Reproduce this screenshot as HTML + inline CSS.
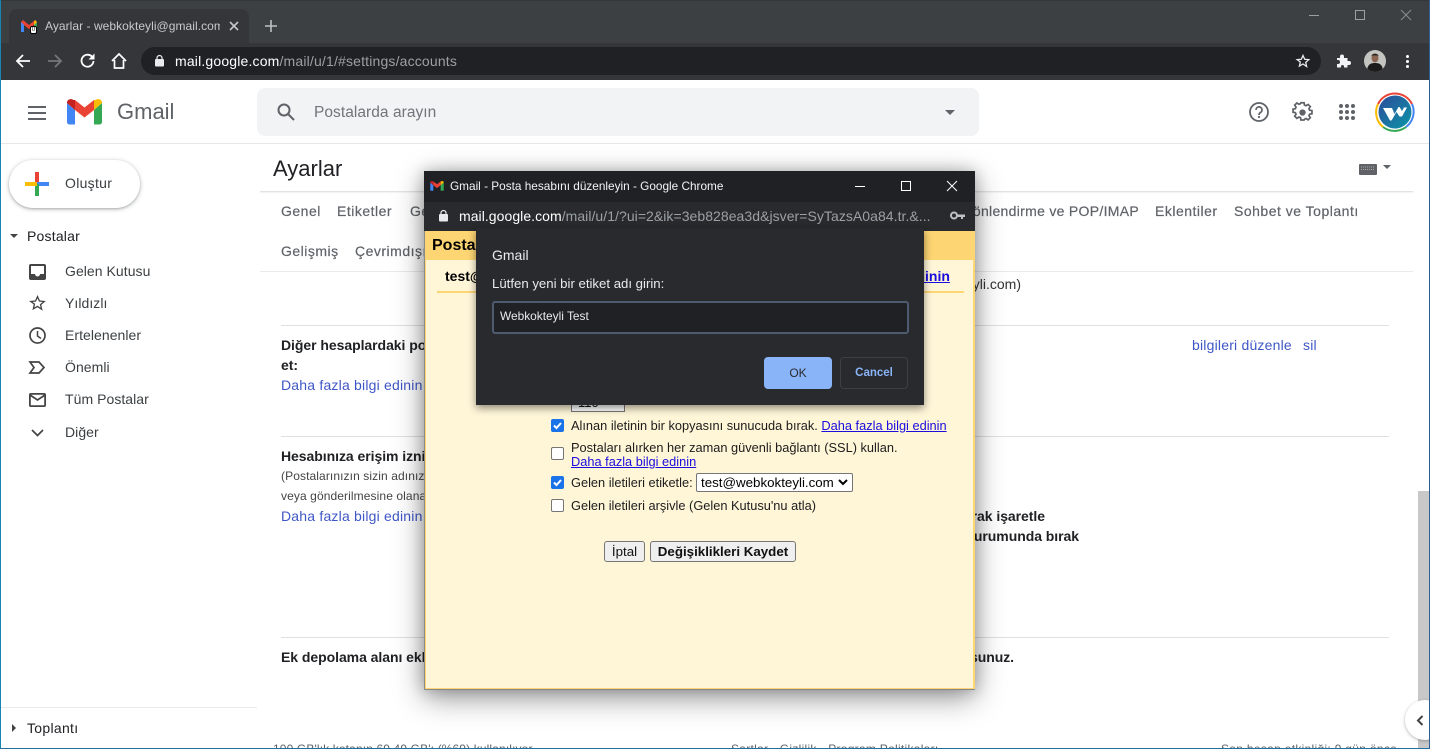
<!DOCTYPE html>
<html lang="tr"><head><meta charset="utf-8"><title>Ayarlar</title>
<style>
html,body{margin:0;padding:0;width:1430px;height:749px;overflow:hidden;background:#fff}
body{position:relative;font-family:"Liberation Sans",sans-serif}
.a{position:absolute}
.t{position:absolute;white-space:nowrap;line-height:16px}
svg{position:absolute;overflow:visible}
.nav{font-size:14px;color:#5f6368;letter-spacing:.5px;-webkit-text-stroke:.2px #5f6368}
.side{font-size:14px;color:#3c4043;letter-spacing:.05px;left:65px;-webkit-text-stroke:0}
.b{font-size:14px;font-weight:bold;color:#202124;letter-spacing:-.05px}
.l{font-size:14px;color:#3f57c6;letter-spacing:.2px}
.s{font-size:12px;color:#444;letter-spacing:.1px}
.p{font-size:12.8px;color:#1c1c1c}
.u{color:#1a0dde;text-decoration:underline}
.cb{position:absolute;left:551px;width:13px;height:13px;box-sizing:border-box;border:1px solid #767676;border-radius:2px;background:#fff}
.cb.on{background:#1a73e8;border-color:#1a73e8}
.btn{position:absolute;box-sizing:border-box;height:21px;border:1px solid #767676;border-radius:3px;background:#efefef;font-size:13.33px;line-height:19px;text-align:center;color:#111}
</style></head><body>

<!-- browser chrome -->
<div class="a" style="left:0;top:0;width:1430px;height:43px;background:#3c4043"></div>
<div class="a" style="left:0;top:0;width:1430px;height:1px;background:#33373a"></div>
<div class="a" style="left:9px;top:9px;width:240px;height:34px;background:#35363a;border-radius:8px 8px 0 0"></div>
<div class="a" style="left:0;top:43px;width:1430px;height:37px;background:#35363a"></div>
<svg style="left:21px;top:20px" width="16" height="12" viewBox="0 0 16 12"><path d="M0 2v10h3V5l5 4 5-4v7h3V2L14 0 8 5 2 0z" fill="#ea4335"/><path d="M0 2v10h3V5z" fill="#4285f4"/><path d="M13 5v7h3V2z" fill="#34a853"/><path d="M13 2v3l3-3-2-2z" fill="#fbbc04"/></svg>
<div class="a" style="left:30px;top:26px;width:7px;height:8px;background:#fff;border:1px solid #000;box-sizing:border-box;border-radius:2px;font-size:6px;line-height:6px;text-align:center;color:#000">0</div>
<div class="t" style="left:45px;top:18px;width:175px;overflow:hidden;font-size:12px;color:#c6cacd;letter-spacing:.05px">Ayarlar - webkokteyli@gmail.com</div>
<svg style="left:229px;top:21px" width="10" height="10"><path d="M1 1l8 8M9 1l-8 8" stroke="#c4c7c9" stroke-width="1.6"/></svg>
<svg style="left:265px;top:20px" width="12" height="12"><path d="M6 0v12M0 6h12" stroke="#bdc1c6" stroke-width="1.6"/></svg>
<svg style="left:1309px;top:15px" width="10" height="1"><path d="M0 .5h10" stroke="#9aa0a6"/></svg>
<svg style="left:1355px;top:10px" width="10" height="10"><rect x=".5" y=".5" width="9" height="9" fill="none" stroke="#9aa0a6"/></svg>
<svg style="left:1401px;top:10px" width="10" height="10"><path d="M0 0l10 10M10 0L0 10" stroke="#8a8e92"/></svg>
<!-- toolbar -->
<svg style="left:16px;top:54px" width="14" height="14"><path d="M7 1L1 7l6 6M1 7h13" fill="none" stroke="#fff" stroke-width="1.8"/></svg>
<svg style="left:48px;top:54px" width="14" height="14"><path d="M7 1l6 6-6 6M13 7H0" fill="none" stroke="#74777b" stroke-width="1.8"/></svg>
<svg style="left:80px;top:53px" width="15" height="15" viewBox="0 0 15 15"><path d="M13.500 8a6 6 0 1 1-1.700-4.500" fill="none" stroke="#fff" stroke-width="1.800"/><path d="M14.500 .5v6h-6z" fill="#fff"/></svg>
<svg style="left:111px;top:53px" width="16" height="16"><path d="M1 8l7-7 7 7M3.500 7v8h9V7" fill="none" stroke="#fff" stroke-width="1.700"/></svg>
<div class="a" style="left:141px;top:47px;width:1180px;height:28px;border-radius:14px;background:#202124"></div>
<svg style="left:155px;top:55px" width="9" height="12"><rect y="4" width="9" height="7.500" rx="1" fill="#e8eaed"/><path d="M2 5V3a2.500 2.500 0 0 1 5 0v2" fill="none" stroke="#e8eaed" stroke-width="1.200"/></svg>
<div class="t" style="left:175px;top:53px;font-size:14px;color:#fff;letter-spacing:.17px">mail.google.com<span style="color:#9aa0a6">/mail/u/1/#settings/accounts</span></div>
<svg style="left:1296px;top:54px" width="14" height="14" viewBox="0 0 24 24"><path d="M12 2.500l2.900 6.500 7.100.7-5.400 4.700 1.600 7L12 17.100l-6.200 3.600 1.600-7L2 9.700l7.100-.7z" fill="none" stroke="#e8eaed" stroke-width="2.200"/></svg>
<svg style="left:1336px;top:53px" width="15" height="15" viewBox="0 0 15 15"><path d="M1 5h3V3.500a2 2 0 0 1 4 0V5h3.500v3H13a2 2 0 0 1 0 4h-1.500v2.500H8V13a1.600 1.600 0 0 0-3 0v1.500H1V11h1a2 2 0 0 0 0-4H1z" fill="#f1f3f4"/></svg>
<svg style="left:1364px;top:50px" width="22" height="22" viewBox="0 0 22 22"><defs><clipPath id="av"><circle cx="11" cy="11" r="11"/></clipPath></defs><g clip-path="url(#av)"><rect width="22" height="22" fill="#c4c4c0"/><path d="M3 22c0-7 3-9 8-9s8 2 8 9z" fill="#1d1c1c"/><ellipse cx="11" cy="8" rx="3.500" ry="4.500" fill="#8a6552"/><path d="M7.500 6c0-3 7-3 7 0l-1-.5h-5z" fill="#2a2320"/></g></svg>
<div class="a" style="left:1406px;top:55px;width:3px;height:3px;border-radius:50%;background:#fff;box-shadow:0 5px #fff,0 10px #fff"></div>

<!-- gmail header -->
<div class="a" style="left:0;top:143px;width:1430px;height:1px;background:#e6e7e8"></div>
<div class="a" style="left:28px;top:106px;width:18px;height:2px;background:#5f6368;box-shadow:0 6px #5f6368,0 12px #5f6368"></div>
<svg style="left:67px;top:99px" width="35" height="26" viewBox="0 0 35 26"><path d="M0 4v19a2.500 2.500 0 0 0 2.500 2.500H8V11z" fill="#4285f4"/><path d="M27 11v14.500h5.500A2.500 2.500 0 0 0 35 23V4z" fill="#34a853"/><path d="M27 1v10l8-7V3.500C35 .5 31 -1 28.500 1z" fill="#fbbc04"/><path d="M8 11V1l9.500 7.500L27 1v10l-9.500 7.500z" fill="#ea4335"/><path d="M0 3.500V4l8 7V1L6.500 1C4 -1 0 .5 0 3.500z" fill="#c5221f"/></svg>
<div class="t" style="left:117px;top:99px;font-size:22px;line-height:26px;color:#5f6368">Gmail</div>
<div class="a" style="left:257px;top:88px;width:722px;height:48px;border-radius:8px;background:#f1f3f4"></div>
<svg style="left:277px;top:103px" width="18" height="18"><circle cx="7" cy="7" r="5.500" fill="none" stroke="#5f6368" stroke-width="2"/><path d="M11 11l6 6" stroke="#5f6368" stroke-width="2"/></svg>
<div class="t" style="left:314px;top:105px;font-size:15.500px;color:#70757a;letter-spacing:.05px">Postalarda arayın</div>
<div class="a" style="left:945px;top:110px;border-style:solid;border-width:5px 5px 0;border-color:#5f6368 transparent transparent"></div>
<svg style="left:1249px;top:102px" width="20" height="20" viewBox="0 0 20 20"><circle cx="10" cy="10" r="9" fill="none" stroke="#5f6368" stroke-width="1.800"/><path d="M7 8a3 3 0 1 1 4.500 2.500c-1 .6-1.500 1-1.500 2.500" fill="none" stroke="#5f6368" stroke-width="1.700"/><circle cx="10" cy="15" r="1.100" fill="#5f6368"/></svg>
<svg style="left:1292px;top:102px" width="21" height="21" viewBox="0 0 24 24"><path d="M10 2h4l.5 3 2 .9 2.600-1.700 2.800 2.800-1.700 2.600.9 2 2.900.4v4l-2.900.5-.9 2 1.700 2.500-2.800 2.800-2.600-1.700-2 .9L14 24h-4l-.5-2.900-2-.9-2.600 1.700-2.800-2.800 1.700-2.500-.9-2L0 14.100v-4l2.900-.4.900-2-1.700-2.600 2.800-2.800 2.600 1.700 2-.9z" transform="translate(1.200 -1) scale(.9)" fill="none" stroke="#5f6368" stroke-width="2.200"/><circle cx="12" cy="12" r="3.600" fill="#5f6368"/></svg>
<svg style="left:1339px;top:104px" width="16" height="16" fill="#5f6368"><circle cx="2" cy="2" r="2"/><circle cx="8" cy="2" r="2"/><circle cx="14" cy="2" r="2"/><circle cx="2" cy="8" r="2"/><circle cx="8" cy="8" r="2"/><circle cx="14" cy="8" r="2"/><circle cx="2" cy="14" r="2"/><circle cx="8" cy="14" r="2"/><circle cx="14" cy="14" r="2"/></svg>
<svg style="left:1375px;top:92px" width="40" height="40" viewBox="0 0 40 40"><defs><linearGradient id="g" x1="0" y1="0" x2="1" y2="1"><stop offset="0" stop-color="#2f4a9a"/><stop offset="1" stop-color="#0a96a8"/></linearGradient></defs><path d="M3 12A19 19 0 0 1 37 12" fill="none" stroke="#ea4335" stroke-width="2"/><path d="M37 12A19 19 0 0 1 31 35" fill="none" stroke="#4285f4" stroke-width="2"/><path d="M31 35A19 19 0 0 1 8 35" fill="none" stroke="#34a853" stroke-width="2"/><path d="M8 35A19 19 0 0 1 3 12" fill="none" stroke="#fbbc04" stroke-width="2"/><circle cx="20" cy="20" r="16.500" fill="url(#g)"/><path d="M8 16h9l2.500 6 4-7h1l2.500 4 2-3.500h3l-5 9h-2.500l-3-4.500-5 8.500h-1.500z" fill="#fff"/></svg>

<!-- sidebar -->
<div class="a" style="left:9px;top:160px;width:131px;height:48px;border-radius:24px;background:#fff;box-shadow:0 1px 2px rgba(60,64,67,.3),0 1px 4px 1px rgba(60,64,67,.18)"></div>
<svg style="left:25px;top:172px" width="24" height="24"><rect x="10" y="0" width="4" height="12" fill="#ea4335"/><rect x="12" y="10" width="12" height="4" fill="#4285f4"/><rect x="10" y="12" width="4" height="12" fill="#34a853"/><rect x="0" y="10" width="12" height="4" fill="#fbbc04"/></svg>
<div class="t" style="left:65px;top:175px;font-size:14px;color:#3c4043;letter-spacing:.3px">Oluştur</div>
<div class="a" style="left:10px;top:234px;border-style:solid;border-width:4px 4px 0;border-color:#444 transparent transparent"></div>
<div class="t" style="left:27px;top:228px;font-size:14px;color:#202124;letter-spacing:.2px">Postalar</div>
<div class="t nav side" style="top:263px">Gelen Kutusu</div>
<div class="t nav side" style="top:295px">Yıldızlı</div>
<div class="t nav side" style="top:327px">Ertelenenler</div>
<div class="t nav side" style="top:359px">Önemli</div>
<div class="t nav side" style="top:391px">Tüm Postalar</div>
<div class="t nav side" style="top:424px">Diğer</div>
<svg style="left:29px;top:264px" width="17" height="16"><path d="M0 2a2 2 0 0 1 2-2h13a2 2 0 0 1 2 2v12a2 2 0 0 1-2 2H2a2 2 0 0 1-2-2z" fill="#444"/><path d="M2 2h13v8h-4a2.500 2.500 0 0 1-5 0H2z" fill="#fff"/></svg>
<svg style="left:29px;top:295px" width="17" height="16" viewBox="0 0 24 24"><path d="M12 2.500l2.900 6.500 7.100.7-5.400 4.700 1.600 7L12 17.100l-6.200 3.600 1.600-7L2 9.700l7.100-.7z" fill="none" stroke="#444" stroke-width="2"/></svg>
<svg style="left:29px;top:327px" width="17" height="17"><circle cx="8.500" cy="8.500" r="7.500" fill="none" stroke="#444" stroke-width="1.700"/><path d="M8.500 4v5l3.500 2.500" fill="none" stroke="#444" stroke-width="1.500"/></svg>
<svg style="left:29px;top:361px" width="16" height="13"><path d="M1 1h9l5 5.500-5 5.500H1l4-5.500z" fill="none" stroke="#444" stroke-width="1.700"/></svg>
<svg style="left:29px;top:393px" width="17" height="14"><rect x=".9" y=".9" width="15.200" height="12.200" rx="1" fill="none" stroke="#444" stroke-width="1.800"/><path d="M1 2l7.500 5L16 2" fill="none" stroke="#444" stroke-width="1.700"/></svg>
<svg style="left:31px;top:429px" width="13" height="8"><path d="M1 1l5.500 5.500L12 1" fill="none" stroke="#444" stroke-width="1.700"/></svg>
<div class="a" style="left:0;top:707px;width:257px;height:1px;background:#e8eaed"></div>
<div class="a" style="left:12px;top:724px;border-style:solid;border-width:4px 0 4px 4px;border-color:transparent transparent transparent #444"></div>
<div class="t" style="left:27px;top:720px;font-size:14px;color:#202124;letter-spacing:.3px">Toplantı</div>

<!-- settings -->
<div class="t" style="left:273px;top:155px;font-size:22px;line-height:28px;color:#202124">Ayarlar</div>
<div class="a" style="left:260px;top:191px;width:1153px;height:1px;background:#e2e3e4;box-shadow:0 1px 1px #efefef"></div>
<svg style="left:1359px;top:164px" width="18" height="11"><rect width="18" height="11" rx="1" fill="#5f6368"/><path d="M2 3h14M2 5.500h14" stroke="#aaa" stroke-dasharray="1 1"/></svg>
<div class="a" style="left:1383px;top:165px;border-style:solid;border-width:4px 4px 0;border-color:#5f6368 transparent transparent"></div>
<div class="t nav" style="left:281px;top:203px">Genel</div>
<div class="t nav" style="left:337px;top:203px">Etiketler</div>
<div class="t nav" style="left:410px;top:203px">Gelen</div>
<div class="t nav" style="right:291px;top:203px;letter-spacing:.3px">Yönlendirme ve POP/IMAP</div>
<div class="t nav" style="left:1155px;top:203px">Eklentiler</div>
<div class="t nav" style="left:1234px;top:203px">Sohbet ve Toplantı</div>
<div class="t nav" style="left:281px;top:243px">Gelişmiş</div>
<div class="t nav" style="left:355px;top:243px">Çevrimdışı</div>
<div class="a" style="left:260px;top:271px;width:1153px;height:1px;background:#e8eaed"></div>
<div class="a" style="left:281px;top:325px;width:1108px;height:1px;background:#e0e0e0"></div>
<div class="a" style="left:281px;top:436px;width:1108px;height:1px;background:#e0e0e0"></div>
<div class="a" style="left:281px;top:637px;width:1108px;height:1px;background:#e0e0e0"></div>
<div class="t" style="left:958px;top:276px;font-size:14px;color:#333">keyli.com)</div>
<div class="t b" style="left:281px;top:337px">Diğer hesaplardaki postaları kontrol</div>
<div class="t b" style="left:281px;top:357px">et:</div>
<div class="t l" style="left:281px;top:377px">Daha fazla bilgi edinin</div>
<div class="t l" style="left:1192px;top:337px">bilgileri düzenle</div>
<div class="t l" style="left:1303px;top:337px">sil</div>
<div class="t b" style="left:281px;top:448px">Hesabınıza erişim izni verin</div>
<div class="t s" style="left:281px;top:468px">(Postalarınızın sizin adınıza okunmasına</div>
<div class="t s" style="left:281px;top:488px">veya gönderilmesine olanak tanır)</div>
<div class="t l" style="left:281px;top:508px">Daha fazla bilgi edinin</div>
<div class="t b" style="right:385px;top:508px">Okundu olarak işaretle</div>
<div class="t b" style="right:351px;top:528px">Okunmadı durumunda bırak</div>
<div class="t b" style="left:281px;top:649px">Ek depolama alanı ekleyin</div>
<div class="t b" style="right:416px;top:649px">Daha fazla alan kullanıyorsunuz.</div>
<div class="t" style="left:273px;top:741px;font-size:12px;color:#5f6368;letter-spacing:.13px">100 GB'lık kotanın 69,49 GB'ı (%69) kullanılıyor</div>
<div class="t" style="left:731px;top:741px;font-size:12px;color:#5f6368;letter-spacing:.28px">Şartlar · Gizlilik · Program Politikaları</div>
<div class="t" style="left:1221px;top:741px;font-size:12px;color:#5f6368;letter-spacing:.3px">Son hesap etkinliği: 9 gün önce</div>
<!-- scrollbar + panel toggle -->
<div class="a" style="left:1418px;top:491px;width:11px;height:258px;background:#c8c8c8"></div>
<div class="a" style="left:1405px;top:700px;width:40px;height:40px;border-radius:20px;background:#fff;box-shadow:0 1px 3px rgba(60,64,67,.4)"></div>
<svg style="left:1416px;top:715px" width="8" height="11"><path d="M6.500 1L2 5.500l4.500 4.500" fill="none" stroke="#444" stroke-width="2"/></svg>

<!-- popup window -->
<div class="a" style="left:424px;top:171px;width:551px;height:519px;background:#fff6d8;box-shadow:0 8px 28px rgba(0,0,0,.4),0 0 14px rgba(0,0,0,.22)"></div>
<div class="a" style="left:424px;top:171px;width:551px;height:31px;background:#202124"></div>
<div class="a" style="left:424px;top:202px;width:551px;height:29px;background:#292a2d"></div>
<svg style="left:430px;top:181px" width="14" height="10" viewBox="0 0 35 26"><path d="M0 4v19a2.500 2.500 0 0 0 2.500 2.500H8V11z" fill="#4285f4"/><path d="M27 11v14.500h5.500A2.500 2.500 0 0 0 35 23V4z" fill="#34a853"/><path d="M27 1v10l8-7V3.500C35 .5 31 -1 28.500 1z" fill="#fbbc04"/><path d="M8 11V1l9.500 7.500L27 1v10l-9.500 7.500z" fill="#ea4335"/><path d="M0 3.500V4l8 7V1L6.500 1C4 -1 0 .5 0 3.500z" fill="#c5221f"/></svg>
<div class="t" style="left:450px;top:178px;font-size:11.8px;color:#f1f3f4">Gmail - Posta hesabını düzenleyin - Google Chrome</div>
<svg style="left:855px;top:186px" width="10" height="1"><path d="M0 .5h10" stroke="#fff"/></svg>
<svg style="left:901px;top:181px" width="10" height="10"><rect x=".5" y=".5" width="9" height="9" fill="none" stroke="#fff"/></svg>
<svg style="left:947px;top:181px" width="10" height="10"><path d="M0 0l10 10M10 0L0 10" stroke="#fff"/></svg>
<svg style="left:439px;top:210px" width="9" height="12"><rect y="4" width="9" height="7.500" rx="1" fill="#e8eaed"/><path d="M2 5V3a2.500 2.500 0 0 1 5 0v2" fill="none" stroke="#e8eaed" stroke-width="1.200"/></svg>
<div class="t" style="left:459px;top:208px;width:475px;font-size:14px;color:#fff;overflow:hidden;letter-spacing:.05px">mail.google.com<span style="color:#9aa0a6">/mail/u/1/?ui=2&amp;ik=3eb828ea3d&amp;jsver=SyTazsA0a84.tr.&amp;...</span></div>
<svg style="left:950px;top:211px" width="15" height="9"><circle cx="4" cy="4.500" r="3" fill="none" stroke="#bdc1c6" stroke-width="2"/><path d="M7 3.500h8v2.500h-2v2h-2V6H7z" fill="#bdc1c6"/></svg>
<!-- popup content -->
<div class="a" style="left:424px;top:231px;width:551px;height:459px;box-sizing:border-box;border:2px solid #fdd573;border-top:0;background:#fff6d8"></div>
<div class="a" style="left:424px;top:689px;width:551px;height:1px;background:#888"></div>
<div class="a" style="left:424px;top:231px;width:1px;height:459px;background:#8a8a8a"></div>
<div class="a" style="left:426px;top:231px;width:547px;height:29px;background:#fdd573"></div>
<div class="t" style="left:432px;top:238px;font-size:16px;font-weight:bold;color:#000">Posta hesabını düzenleyin</div>
<div class="t" style="left:445px;top:268px;font-size:14px;font-weight:bold;color:#000">test@webkokteyli.com</div>
<div class="t u" style="left:876px;top:268px;font-size:14px;font-weight:bold">bilgi edinin</div>
<div class="a" style="left:437px;top:291px;width:527px;height:2px;background:#fdd573"></div>
<div class="a" style="left:571px;top:395px;width:54px;height:17px;box-sizing:border-box;border:1px solid #767676;background:#fff;font-size:13px;color:#111;padding-left:6px;line-height:13px">110</div>

<div class="cb on" style="top:419px"></div><svg style="left:551px;top:419px" width="13" height="13"><path d="M3 6.500l2.500 2.500 4.500-5" fill="none" stroke="#fff" stroke-width="2"/></svg>
<div class="t p" style="left:571px;top:418px">Alınan iletinin bir kopyasını sunucuda bırak. <span class="u">Daha fazla bilgi edinin</span></div>
<div class="cb" style="top:447px"></div>
<div class="t p" style="left:571px;top:440px">Postaları alırken her zaman güvenli bağlantı (SSL) kullan.</div>
<div class="t p u" style="left:571px;top:454px">Daha fazla bilgi edinin</div>
<div class="cb on" style="top:476px"></div><svg style="left:551px;top:476px" width="13" height="13"><path d="M3 6.500l2.500 2.500 4.500-5" fill="none" stroke="#fff" stroke-width="2"/></svg>
<div class="t p" style="left:571px;top:475px">Gelen iletileri etiketle:</div>
<div class="a" style="left:696px;top:473px;width:157px;height:19px;box-sizing:border-box;border:1px solid #767676;border-radius:2px;background:#fff;font-size:13.33px;line-height:17px;padding-left:4px;color:#000;white-space:nowrap">test@webkokteyli.com</div>
<svg style="left:838px;top:479px" width="10" height="7"><path d="M1 1l4 4 4-4" fill="none" stroke="#000" stroke-width="2"/></svg>
<div class="cb" style="top:499px"></div>
<div class="t p" style="left:571px;top:498px">Gelen iletileri arşivle (Gelen Kutusu'nu atla)</div>
<div class="btn" style="left:604px;top:541px;width:41px">İptal</div>
<div class="btn" style="left:650px;top:541px;width:146px;font-weight:bold">Değişiklikleri Kaydet</div>

<!-- alert -->
<div class="a" style="left:476px;top:228px;width:448px;height:177px;background:#292a2d;box-shadow:0 3px 8px rgba(0,0,0,.45)"></div>
<div class="t" style="left:492px;top:247px;font-size:14px;color:#e8eaed">Gmail</div>
<div class="t" style="left:492px;top:276px;font-size:13.2px;color:#e8eaed">Lütfen yeni bir etiket adı girin:</div>
<div class="a" style="left:492px;top:301px;width:417px;height:33px;box-sizing:border-box;border:2px solid #4d5a70;border-radius:3px;background:#202124"></div>
<div class="t" style="left:500px;top:308px;font-size:11.9px;color:#e8eaed">Webkokteyli Test</div>
<div class="a" style="left:764px;top:357px;width:68px;height:32px;border-radius:4px;background:#8ab4f8;color:#292a2d;font-size:12px;line-height:32px;text-align:center">OK</div>
<div class="a" style="left:840px;top:357px;width:68px;height:32px;box-sizing:border-box;border:1px solid #3c4043;border-radius:4px;color:#8ab4f8;font-size:11.5px;font-weight:bold;line-height:30px;text-align:center">Cancel</div>

<!-- window frame -->
<div class="a" style="left:0;top:0;width:1px;height:749px;background:#1a85b0"></div>
<div class="a" style="left:0;top:748px;width:1430px;height:1px;background:#1f6f9f"></div>
<div class="a" style="left:1429px;top:0;width:1px;height:749px;background:#2f5f95"></div>
</body></html>
